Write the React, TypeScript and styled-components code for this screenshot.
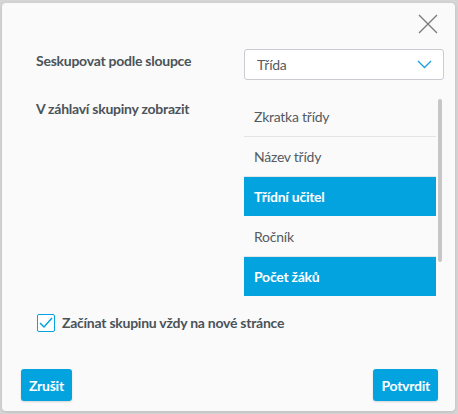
import React, { useState } from 'react';
import styled, { createGlobalStyle } from 'styled-components';

const GlobalStyle = createGlobalStyle`
  html, body {
    margin: 0;
    padding: 0;
    background: #d6d6d6;
  }
  body {
    font-family: 'Lato', 'Liberation Sans', sans-serif;
    letter-spacing: -0.25px;
  }
  * {
    box-sizing: border-box;
  }
`;

const Page = styled.div`
  width: 458px;
  height: 414px;
  padding: 3px 3px 3px 2px;
`;

const Dialog = styled.div`
  width: 453px;
  height: 408px;
  background: #fafafa;
  border-radius: 4px;
  box-shadow: 0 1px 4px rgba(0, 0, 0, 0.12);
  display: flex;
  flex-direction: column;
  padding: 11px 17px 10px 19px;
`;

const Header = styled.div`
  display: flex;
  justify-content: flex-end;
  height: 35px;
`;

const CloseButton = styled.button`
  width: 20px;
  height: 20px;
  padding: 0;
  border: none;
  background: none;
  cursor: pointer;
  display: flex;
  align-items: center;
  justify-content: center;
`;

const Form = styled.div`
  display: grid;
  grid-template-columns: 208px 200px;
  row-gap: 17px;
  padding-left: 15px;
`;

const Label = styled.div`
  font-size: 14px;
  font-weight: 700;
  color: #4b5359;
  padding-top: 3px;
`;

const Select = styled.div`
  height: 31px;
  border: 1px solid #c9cdd1;
  border-radius: 3px;
  background: #fff;
  display: flex;
  align-items: center;
  justify-content: space-between;
  padding: 0 11px 0 12px;
  font-size: 14px;
  color: #555b61;
`;

const ListBox = styled.div`
  display: flex;
  height: 200px;
`;

const ListViewport = styled.div`
  width: 192px;
  overflow: hidden;
`;

const ScrollTrack = styled.div`
  width: 8px;
  padding: 2px;
`;

const ScrollThumb = styled.div`
  width: 4px;
  background: #c6c6c6;
  border-radius: 2px;
`;

const Item = styled.div<{ $selected?: boolean }>`
  height: 40px;
  display: flex;
  align-items: center;
  padding-left: 10px;
  font-size: 14px;
  font-weight: ${(p) => (p.$selected ? 700 : 400)};
  color: ${(p) => (p.$selected ? '#fff' : '#555b61')};
  background: ${(p) => (p.$selected ? '#03a3df' : 'transparent')};
  border-bottom: 1px solid ${(p) => (p.$selected ? '#fafafa' : '#e2e4e6')};
  cursor: pointer;
`;

const CheckRow = styled.div`
  display: flex;
  align-items: center;
  gap: 7px;
  margin: 16px 0 0 16px;
  cursor: pointer;
`;

const CheckText = styled.span`
  font-size: 14px;
  font-weight: 700;
  line-height: 20px;
  color: #4b5359;
`;

const CheckBox = styled.span`
  width: 18px;
  height: 18px;
  flex-shrink: 0;
  border: 1px solid #03a3df;
  border-radius: 2px;
  background: #fff;
  display: flex;
  align-items: center;
  justify-content: center;
`;

const Footer = styled.div`
  margin-top: auto;
  display: flex;
  justify-content: space-between;
`;

const Button = styled.button`
  height: 32px;
  padding: 0 8px;
  border: none;
  border-radius: 3px;
  background: #03a3df;
  color: #fff;
  font-family: inherit;
  letter-spacing: inherit;
  font-size: 14px;
  font-weight: 700;
  box-shadow: 0 1px 2px rgba(0, 0, 0, 0.15);
  cursor: pointer;
`;

const ITEMS = ['Zkratka třídy', 'Název třídy', 'Třídní učitel', 'Ročník', 'Počet žáků'];
const VIEW_HEIGHT = 200;
const CONTENT_HEIGHT = 240;

function App() {
  const [selected, setSelected] = useState<string[]>(['Třídní učitel', 'Počet žáků']);
  const [newPage, setNewPage] = useState(true);

  const toggle = (name: string) => {
    setSelected((s) => (s.includes(name) ? s.filter((x) => x !== name) : [...s, name]));
  };

  const thumbHeight = Math.round(((VIEW_HEIGHT - 4) * VIEW_HEIGHT) / CONTENT_HEIGHT);

  return (
    <Page>
      <GlobalStyle />
      <Dialog>
        <Header>
          <CloseButton aria-label='Zavřít'>
            <svg width='20' height='20' viewBox='0 0 20 20'>
              <path d='M1 1 L19 19 M19 1 L1 19' stroke='#7d7d7d' strokeWidth='1.4' fill='none' />
            </svg>
          </CloseButton>
        </Header>
        <Form>
          <Label>Seskupovat podle sloupce</Label>
          <Select>
            <span>Třída</span>
            <svg width='15' height='9' viewBox='0 0 15 9'>
              <polyline points='1,1 7.5,7.5 14,1' stroke='#1a9fdc' strokeWidth='1.3' fill='none' />
            </svg>
          </Select>
          <Label>V záhlaví skupiny zobrazit</Label>
          <ListBox>
            <ListViewport>
              {ITEMS.map((name) => (
                <Item key={name} $selected={selected.includes(name)} onClick={() => toggle(name)}>
                  {name}
                </Item>
              ))}
            </ListViewport>
            <ScrollTrack>
              <ScrollThumb style={{ height: thumbHeight }} />
            </ScrollTrack>
          </ListBox>
        </Form>
        <CheckRow onClick={() => setNewPage(!newPage)}>
          <CheckBox>
            {newPage && (
              <svg width='14' height='12' viewBox='0 0 14 12'>
                <polyline points='1,6 5,10 13,1' stroke='#03a3df' strokeWidth='1.5' fill='none' />
              </svg>
            )}
          </CheckBox>
          <CheckText>Začínat skupinu vždy na nové stránce</CheckText>
        </CheckRow>
        <Footer>
          <Button>Zrušit</Button>
          <Button>Potvrdit</Button>
        </Footer>
      </Dialog>
    </Page>
  );
}

export default App;
